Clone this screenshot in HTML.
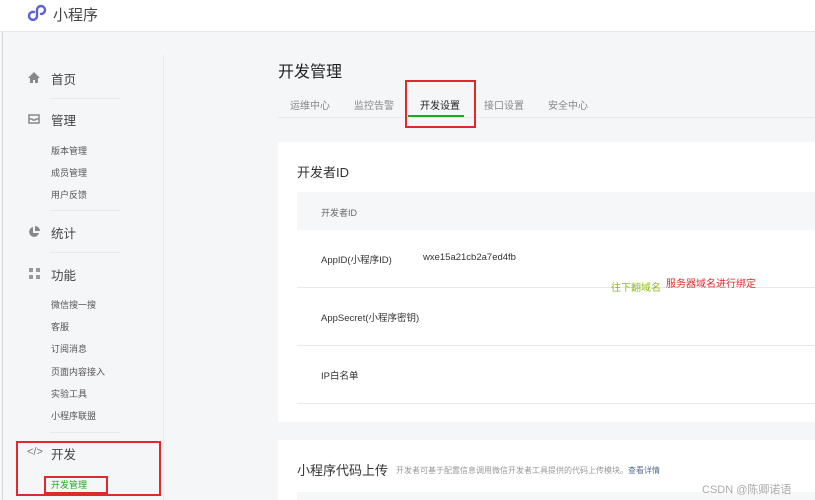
<!DOCTYPE html>
<html><head><meta charset="utf-8"><style>
*{margin:0;padding:0;box-sizing:border-box}
body{width:815px;height:500px;overflow:hidden;background:#f5f6f8;font-family:"Liberation Sans","Noto Sans CJK SC",sans-serif;position:relative;color:#353535}
.a{position:absolute;white-space:nowrap}
.hdr{left:0;top:0;width:815px;height:32px;background:#fff;border-bottom:1px solid #e5e6e8}
.nav{font-size:12.5px;color:#444}
.sub{font-size:9px;color:#555}
.ln{position:absolute;height:1px;background:#e8e9eb}
.card{background:#fff}
</style></head><body>
<div class="a" style="left:2px;top:0;width:1px;height:500px;background:#d8d8d8"></div>
<div class="a hdr"></div>
<svg class="a" style="left:28px;top:3px" width="20" height="20" viewBox="0 0 20 20"><path d="M6 9a4 4 0 1 0 3 4V7a4 4 0 1 1 4 4" fill="none" stroke="#5a61d6" stroke-width="2.4" stroke-linecap="round"/></svg>
<div class="a" style="left:53px;top:4px;font-size:15px;color:#444">小程序</div>
<div class="a" style="left:163px;top:55px;width:1px;height:445px;background:#e8e9eb"></div>

<svg class="a" style="left:28px;top:72px" width="12" height="11" viewBox="0 0 12 11"><path d="M6 0L0 6h2v5h3V8h2v3h3V6h2z" fill="#888"/></svg>
<div class="a nav" style="left:51px;top:69px">首页</div>
<div class="ln" style="left:50px;top:98px;width:70px"></div>
<svg class="a" style="left:28px;top:114px" width="12" height="10" viewBox="0 0 12 10"><path d="M1 1h10v8H1z M1 5h3l1 1h2l1-1h3" fill="none" stroke="#888" stroke-width="1.5"/></svg>
<div class="a nav" style="left:51px;top:110px">管理</div>
<div class="a sub" style="left:51px;top:144px">版本管理</div>
<div class="a sub" style="left:51px;top:166px">成员管理</div>
<div class="a sub" style="left:51px;top:188px">用户反馈</div>
<div class="ln" style="left:50px;top:210px;width:70px"></div>
<svg class="a" style="left:28px;top:226px" width="12" height="12" viewBox="0 0 12 12"><path d="M5 1a5 5 0 1 0 6 6H5z M7 0v5h5a5 5 0 0 0-5-5z" fill="#888"/></svg>
<div class="a nav" style="left:51px;top:223px">统计</div>
<div class="ln" style="left:50px;top:252px;width:70px"></div>
<svg class="a" style="left:29px;top:268px" width="11" height="11" viewBox="0 0 11 11"><path d="M0 0h4v4H0zM7 0h4v4H7zM0 7h4v4H0zM7 7h4v4H7z" fill="#999"/></svg>
<div class="a nav" style="left:51px;top:265px">功能</div>
<div class="a sub" style="left:51px;top:298px">微信搜一搜</div>
<div class="a sub" style="left:51px;top:320px">客服</div>
<div class="a sub" style="left:51px;top:342px">订阅消息</div>
<div class="a sub" style="left:51px;top:365px">页面内容接入</div>
<div class="a sub" style="left:51px;top:387px">实验工具</div>
<div class="a sub" style="left:51px;top:409px">小程序联盟</div>
<div class="ln" style="left:50px;top:432px;width:70px"></div>
<div class="a" style="left:27px;top:446px;font-size:11px;color:#777">&lt;/&gt;</div>
<div class="a nav" style="left:51px;top:444px">开发</div>
<div class="a sub" style="left:51px;top:478px;color:#1aad19">开发管理</div>
<div class="a" style="left:16px;top:441px;width:145px;height:55px;border:2px solid #e0292c"></div>
<div class="a" style="left:44px;top:476px;width:64px;height:18px;border:2px solid #e0292c"></div>

<div class="a" style="left:278px;top:58px;font-size:16px;color:#222">开发管理</div>
<div class="ln" style="left:278px;top:117px;width:537px"></div>
<div class="a" style="left:290px;top:97px;font-size:10px;color:#888">运维中心</div>
<div class="a" style="left:354px;top:97px;font-size:10px;color:#888">监控告警</div>
<div class="a" style="left:420px;top:97px;font-size:10px;color:#222">开发设置</div>
<div class="a" style="left:484px;top:97px;font-size:10px;color:#888">接口设置</div>
<div class="a" style="left:548px;top:97px;font-size:10px;color:#888">安全中心</div>
<div class="a" style="left:408px;top:115px;width:56px;height:2px;background:#1aad19"></div>
<div class="a" style="left:405px;top:80px;width:71px;height:48px;border:2px solid #e0292c"></div>

<div class="a card" style="left:278px;top:142px;width:537px;height:280px"></div>
<div class="a" style="left:297px;top:162px;font-size:13px;color:#333">开发者ID</div>
<div class="a" style="left:297px;top:192px;width:518px;height:38px;background:#f6f7f9"></div>
<div class="a" style="left:321px;top:206px;font-size:9px;color:#666">开发者ID</div>
<div class="a" style="left:321px;top:252px;font-size:9.5px;color:#333">AppID(小程序ID)</div>
<div class="a" style="left:423px;top:252px;font-size:9.5px;color:#333">wxe15a21cb2a7ed4fb</div>
<div class="ln" style="left:297px;top:287px;width:518px"></div>
<div class="a" style="left:321px;top:310px;font-size:9.5px;color:#333">AppSecret(小程序密钥)</div>
<div class="ln" style="left:297px;top:345px;width:518px"></div>
<div class="a" style="left:321px;top:368px;font-size:9.5px;color:#333">IP白名单</div>
<div class="ln" style="left:297px;top:403px;width:518px"></div>
<div class="a" style="left:611px;top:279px;font-size:10px;color:#8dbb1a">往下翻域名</div>
<div class="a" style="left:666px;top:275px;font-size:10px;color:#e0292c">服务器域名进行绑定</div>

<div class="a card" style="left:278px;top:440px;width:537px;height:60px"></div>
<div class="a" style="left:297px;top:460px;font-size:13px;color:#333">小程序代码上传</div>
<div class="a" style="left:396px;top:465px;font-size:8px;color:#999">开发者可基于配置信息调用微信开发者工具提供的代码上传模块。<span style="color:#576b95">查看详情</span></div>
<div class="a" style="left:297px;top:492px;width:518px;height:8px;background:#f6f7f9"></div>
<div class="a" style="left:702px;top:481px;font-size:11px;color:#aaa">CSDN @陈卿诺语</div>
</body></html>
